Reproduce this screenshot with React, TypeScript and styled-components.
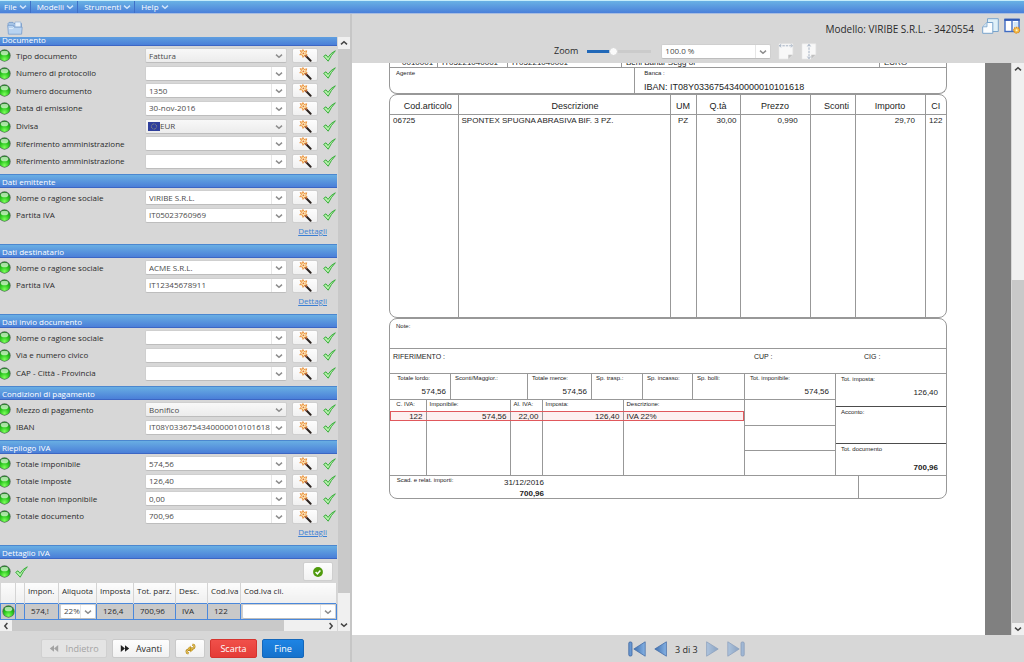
import React, { useState } from 'react';
import styled, { createGlobalStyle, css } from 'styled-components';

const GlobalStyle = createGlobalStyle`
  *, *::before, *::after { box-sizing: border-box; }
  html, body { margin: 0; padding: 0; }
  body, button, input, select {
    font-family: "Open Sans", "Noto Sans", sans-serif;
    font-size: 8px;
    line-height: 12px;
    color: #2a2a2a;
  }
  button, input, select { margin: 0; padding: 0; border: 0; background: none; }
  svg { display: block; flex: none; }
`;

const line = '#989898';

/* ---------- shell ---------- */

const Screen = styled.div`
  display: flex;
  flex-direction: column;
  height: 100vh;
  overflow: hidden;
  background: #d7d7d7;
`;

const MenuBar = styled.nav`
  display: flex;
  flex: none;
  height: 14px;
  border-top: 1px solid #c4edfb;
  border-bottom: 1px solid #a9bde0;
  background: linear-gradient(#68b1e4, #4a80da);
`;

const MenuItem = styled.button`
  display: flex;
  align-items: center;
  gap: 2px;
  padding: 0 3px 0 6px;
  color: #fff;
  border-right: 1px solid #3f70c8;
  &:first-child { padding-left: 4px; }
  &:last-child { border-right: 0; }
`;

const Columns = styled.div`
  display: flex;
  flex: 1;
  min-height: 0;
`;

const Sidebar = styled.aside`
  display: flex;
  flex-direction: column;
  flex: none;
  width: 352px;
  border-right: 2px solid #c6c6c6;
`;

const SideTools = styled.div`
  flex: none;
  height: 23px;
  padding: 7px 7px 0;
`;

const SideScroll = styled.div`
  display: flex;
  flex: 1;
  min-height: 0;
`;

const SideView = styled.div`
  flex: none;
  width: 337px;
  overflow: hidden;
`;

const SideContent = styled.form`
  margin-top: -5px;
`;

const Actions = styled.footer`
  display: flex;
  flex: none;
  align-items: center;
  gap: 5px;
  height: 31px;
  padding: 4px 0 0 41px;
`;

const actionTones = {
  plain: css`background: linear-gradient(#fdfdfd, #f1f1f1); border-color: #cacaca; color: #2a2a2a;`,
  muted: css`background: #e4e4e4; border-color: #d0d0d0; color: #a3a3a3;`,
  red: css`background: linear-gradient(#f0504a, #e53c36); border-color: #d5342e; color: #fff;`,
  blue: css`background: linear-gradient(#1d84e4, #1672cc); border-color: #1467ba; color: #fff;`,
};

const ActionButton = styled.button<{ $tone: keyof typeof actionTones; $width: number }>`
  display: flex;
  align-items: center;
  justify-content: center;
  gap: 6px;
  width: ${(p) => p.$width}px;
  height: 19px;
  border: 1px solid;
  border-radius: 2px;
  font-size: 9px;
  ${(p) => actionTones[p.$tone]}
`;

/* ---------- scroll bars ---------- */

const ScrollBar = styled.div<{ $horizontal?: boolean }>`
  display: flex;
  flex: none;
  flex-direction: ${(p) => (p.$horizontal ? 'row' : 'column')};
  ${(p) => (p.$horizontal ? 'height: 12px;' : 'width: 12px; margin-left: 1px;')}
  background: #f0f0f0;
`;

const ScrollArrow = styled.button`
  display: flex;
  flex: none;
  align-items: center;
  justify-content: center;
  width: 12px;
  height: 12px;
  background: #f0f0f0;
`;

const Track = styled.div<{ $grow: number; $thumb?: boolean }>`
  flex: ${(p) => p.$grow};
  background: ${(p) => (p.$thumb ? '#c9c9c9' : '#f0f0f0')};
`;

/* ---------- form ---------- */

const Section = styled.fieldset`
  min-width: 0;
  margin: 0;
  padding: 0 0 4px;
  border: 0;
`;

const SectionTitle = styled.h2`
  height: 14px;
  margin: 0 0 1px;
  padding: 0 2px;
  font-size: 8px;
  font-weight: 400;
  line-height: 13px;
  color: #fff;
  border-top: 1px solid #4b87cf;
  border-bottom: 1px solid #3c66c4;
  background: linear-gradient(#68aee3, #4a7fd8);
`;

const Rows = styled.div<{ $count: number }>`
  display: grid;
  grid-auto-rows: 1fr;
  height: ${(p) => Math.floor((p.$count * 53) / 3)}px;
`;

const Row = styled.div`
  display: grid;
  grid-template-columns: 13px 124px 142px 26px 13px;
  column-gap: 5px;
  align-items: center;
  margin-left: -2px;
`;

const Label = styled.label`
  white-space: nowrap;
`;

const Combo = styled.div<{ $flat?: boolean }>`
  display: flex;
  height: 15px;
  border: 1px solid #cfcfcf;
  border-bottom-color: #bdbdbd;
  border-radius: 2px;
  overflow: hidden;
  background: ${(p) => (p.$flat ? 'linear-gradient(#f8f8f8, #ececec)' : '#fff')};
`;

const TextField = styled.input`
  flex: 1;
  min-width: 0;
  margin-left: 3px;
  color: #4a4a4a;
  outline: 0;
`;

const SelectField = styled.select`
  flex: 1;
  min-width: 0;
  padding-left: 3px;
  appearance: none;
  color: #4a4a4a;
  outline: 0;
`;

const FlagHolder = styled.span`
  display: flex;
  align-items: center;
  padding-left: 2px;
  & + select { padding-left: 0; }
`;

const DropButton = styled.button<{ $flat?: boolean }>`
  display: flex;
  flex: none;
  align-items: center;
  justify-content: center;
  width: 15px;
  padding-top: 1px;
  border-left: 1px solid ${(p) => (p.$flat ? 'transparent' : '#e6e6e6')};
`;

const IconButton = styled.button<{ $wide?: boolean }>`
  display: flex;
  align-items: center;
  justify-content: center;
  width: ${(p) => (p.$wide ? 30 : 26)}px;
  height: ${(p) => (p.$wide ? 19 : 15)}px;
  border: 1px solid #cfcfcf;
  border-radius: 2px;
  background: linear-gradient(#fdfdfd, #f1f1f1);
`;

const Details = styled.div`
  display: flex;
  justify-content: flex-end;
  height: 16px;
  padding: 1px 10px 0 0;
  a { color: #3b7fd4; }
`;

const VatTools = styled.div`
  display: flex;
  align-items: center;
  gap: 4px;
  height: 23px;
  margin-left: -2px;
  padding-right: 4px;
  button { margin-left: auto; }
`;

const VatTable = styled.table`
  width: 100%;
  table-layout: fixed;
  border-collapse: collapse;
  th {
    height: 20px;
    padding: 0 0 4px 3px;
    text-align: left;
    font-weight: 400;
    white-space: nowrap;
    border-right: 1px solid #d4d4d4;
    background: linear-gradient(#fcfcfc, #efefef);
  }
  td {
    height: 16px;
    padding: 0 0 0 6px;
    overflow: hidden;
    white-space: nowrap;
    border: 1px solid #4a88dc;
    background: #c9c9c9;
  }
  td.control { padding: 0 0 0 1px; }
`;

/* ---------- viewer ---------- */

const Viewer = styled.main`
  display: flex;
  flex: 1;
  flex-direction: column;
  min-width: 0;
`;

const ModelBar = styled.header`
  display: flex;
  flex: none;
  align-items: flex-start;
  justify-content: flex-end;
  gap: 5px;
  height: 26px;
  padding: 4px 3px 0 0;
`;

const ModelName = styled.h1`
  margin: 3px 3px 0 0;
  font-size: 10px;
  font-weight: 400;
  line-height: 16px;
`;

const ZoomBar = styled.div`
  display: flex;
  flex: none;
  align-items: center;
  gap: 7px;
  height: 23px;
  padding: 0 0 1px 202px;
`;

const ZoomLabel = styled.label`
  margin-right: 2px;
  font-size: 9px;
`;

const Slider = styled.input`
  width: 64px;
  height: 12px;
  margin-right: 3px;
  appearance: none;
  background: linear-gradient(90deg, #2168b8 40%, #cbcbcb 40%) center / 100% 3px no-repeat;
  &::-webkit-slider-thumb {
    appearance: none;
    width: 9px;
    height: 9px;
    border: 1px solid #d4d4d4;
    border-radius: 50%;
    background: #fafafa;
  }
`;

const ZoomCombo = styled(Combo)`
  width: 110px;
`;

const PageArea = styled.div`
  display: flex;
  flex: 1;
  min-height: 0;
`;

const Paper = styled.article`
  flex: 1;
  min-width: 0;
  padding: 0 38px 0 37px;
  overflow: hidden;
  background: #fff;
  color: #1c1c1c;
  font-family: "Liberation Sans", Arial, sans-serif;
  font-size: 8px;
  line-height: 10px;
`;

const Desk = styled.div`
  flex: none;
  width: 26px;
  background: #808080;
`;

const Pager = styled.footer`
  display: flex;
  flex: none;
  align-items: center;
  gap: 8px;
  height: 27px;
  padding-left: 276px;
  button { display: flex; }
  button:disabled { opacity: 0.5; }
`;

const PageCount = styled.span`
  padding-top: 3px;
  font-size: 9px;
`;

/* ---------- invoice ---------- */

const Sheet = styled.div`
  margin-top: -9px;
`;

const Box = styled.section`
  border: 1px solid ${line};
  border-radius: 8px;
  overflow: hidden;
`;

const TopBox = styled(Box)`
  border-top: 0;
  border-radius: 0 0 8px 8px;
`;

const Strip = styled.div<{ $columns: string; $height: number }>`
  display: grid;
  grid-template-columns: ${(p) => p.$columns};
  height: ${(p) => p.$height}px;
  border-bottom: 1px solid ${line};
  &:last-child { border-bottom: 0; }
`;

const Cell = styled.div`
  display: flex;
  flex-direction: column;
  justify-content: space-between;
  min-width: 0;
  padding: 0 4px 2px;
  white-space: nowrap;
  border-right: 1px solid ${line};
  &:last-child { border-right: 0; }
`;

const ClippedCell = styled(Cell)`
  padding: 4px 0 0 4px;
  font-size: 8px;
  &:first-child { padding-left: 12px; }
`;

const Caption = styled.span`
  font-size: 6px;
  line-height: 9px;
`;

const Amount = styled.span<{ $strong?: boolean }>`
  align-self: flex-end;
  font-size: 8px;
  font-weight: ${(p) => (p.$strong ? 700 : 400)};
`;

const Plain = styled.div<{ $top: number }>`
  display: flex;
  flex-direction: column;
  justify-content: space-between;
  padding: ${(p) => p.$top}px 6px 1px;
  border-right: 1px solid ${line};
  &:last-child { border-right: 0; }
`;

const BankLine = styled.span`
  font-size: 9px;
  padding-left: 3px;
`;

const Reference = styled.span`
  padding: 3px 3px 0;
  font-size: 7px;
`;

const ItemTable = styled.table`
  width: 100%;
  table-layout: fixed;
  border-collapse: collapse;
  th, td { border-right: 1px solid ${line}; }
  th:last-child, td:last-child { border-right: 0; }
  th {
    height: 19px;
    padding: 4px 0 0;
    font-size: 9px;
    font-weight: 400;
    border-bottom: 1px solid ${line};
  }
  th.text { padding-left: 22px; }
  th.code { padding-left: 8px; }
  td {
    height: 203px;
    padding: 1px 3px 0;
    vertical-align: top;
    white-space: nowrap;
  }
  td.num { text-align: right; }
  td.mid { text-align: center; }
`;

const Totals = styled.div`
  display: grid;
  grid-template-columns: 1fr 91px 110px;
  height: 102px;
  border-bottom: 1px solid ${line};
`;

const TotalsLeft = styled.div`
  border-right: 1px solid ${line};
`;

const Stack = styled.div<{ $rows: string }>`
  display: grid;
  grid-template-rows: ${(p) => p.$rows};
  border-right: 1px solid ${line};
  &:last-child { border-right: 0; }
`;

const StackCell = styled.div<{ $dark?: boolean }>`
  display: flex;
  flex-direction: column;
  justify-content: space-between;
  padding: 0 6px 2px 5px;
  border-bottom: 1px solid ${(p) => (p.$dark ? '#4c4c4c' : line)};
  &:last-child { border-bottom: 0; padding-bottom: 3px; }
`;

const TallStackCell = styled(StackCell)`
  padding: 1px 8px 8px 5px;
`;

const TaxTable = styled.table`
  width: 100%;
  table-layout: fixed;
  border-collapse: collapse;
  th, td { border-right: 1px solid ${line}; padding: 0 3px; }
  th:last-child, td:last-child { border-right: 0; }
  th {
    height: 11px;
    font-size: 6px;
    line-height: 9px;
    font-weight: 400;
    text-align: left;
    vertical-align: top;
    white-space: nowrap;
  }
  td { height: 10px; font-size: 8px; line-height: 9px; text-align: right; }
  td:last-child { text-align: left; }
  tr.hit { outline: 1px solid #e0585c; outline-offset: -1px; background: #fdf0f0; }
  tr.rest td { height: 55px; }
`;

const DueText = styled.div`
  display: flex;
  flex-direction: column;
  align-items: flex-end;
  font-size: 8px;
  line-height: 11px;
  padding: 1px 2px 0 0;
`;

/* ---------- icons ---------- */

const Chevron = ({ dir = 'down', color = '#8e8e8e' }: { dir?: string; color?: string }) => {
  const turn: Record<string, number> = { down: 0, up: 180, left: 90, right: 270 };
  return (
    <svg width="8" height="8" viewBox="0 0 8 8">
      <path d="M1 2.6 4 5.2 7 2.6" fill="none" stroke={color} strokeWidth="1.5" transform={`rotate(${turn[dir]} 4 4)`} />
    </svg>
  );
};

const Led = () => (
  <svg width="13" height="13" viewBox="0 0 12 12">
    <defs>
      <radialGradient id="led" cx="50%" cy="85%" r="85%">
        <stop offset="0" stopColor="#7dff5c" />
        <stop offset="0.5" stopColor="#2cc81f" />
        <stop offset="1" stopColor="#0d7a12" />
      </radialGradient>
    </defs>
    <circle cx="6" cy="6" r="5.7" fill="#55705a" />
    <circle cx="6" cy="6" r="5" fill="url(#led)" />
    <ellipse cx="6" cy="3.7" rx="3.5" ry="2.1" fill="#e6fde0" opacity="0.7" />
  </svg>
);

const Tick = () => (
  <svg width="13" height="12" viewBox="0 0 13 12">
    <path d="M.7 6.3 3 4.8 5 7.4Q7.6 3 12.3.8 8 5.2 5.2 11.2Z" fill="#b9f3ae" stroke="#38ae3a" strokeWidth="1" strokeLinejoin="round" />
  </svg>
);

const Wand = () => (
  <svg width="13" height="13" viewBox="0 0 13 13">
    <path d="M6 6 11.6 11.8" stroke="#2c2420" strokeWidth="2" strokeLinecap="round" />
    <path d="M5 5 7.8 7.8" stroke="#a4583a" strokeWidth="1.8" />
    <path d="M3.9.5 5 2.5 7.8 1.8 6.8 4.3 8.2 6 5.6 6.1 4 8.4 3.3 5.9 .7 5.6 2.5 4 1.2 1.6 3.4 2.3Z" fill="#fdebb8" stroke="#e98d38" strokeWidth="0.9" strokeLinejoin="round" />
    <circle cx="4.4" cy="4.3" r="0.9" fill="#e0703c" />
  </svg>
);

const Flag = () => (
  <svg width="12" height="9" viewBox="0 0 12 9">
    <rect width="12" height="9" fill="#2f3f9c" />
    <circle cx="6" cy="4.5" r="2.6" fill="none" stroke="#a6a678" strokeWidth="0.9" strokeDasharray="0.9 0.7" />
  </svg>
);

const Folder = () => (
  <svg width="16" height="14" viewBox="0 0 16 14">
    <path d="M1 2.5 2 1.4H6L7 2.5H14.5V12.5H2Z" fill="#a7c6e8" stroke="#7197c8" strokeWidth="0.8" />
    <path d="M8 6V1H13.8V6Z" fill="#e6f1fc" stroke="#86a9d4" strokeWidth="0.6" />
    <path d="M.7 4.4H6.8V6.2H15.2L14.6 13.2H1.4Z" fill="#b8d3f1" stroke="#7c9fcd" strokeWidth="0.8" />
    <path d="M6.8 6.2 5.8 7.6H2" fill="none" stroke="#e4f0fc" strokeWidth="0.9" />
  </svg>
);

const OkBadge = () => (
  <svg width="10" height="10" viewBox="0 0 10 10">
    <circle cx="5" cy="5" r="4.9" fill="#4f9a0c" />
    <path d="M2.6 5 4.4 6.8 7.4 3.6" fill="none" stroke="#fff" strokeWidth="1.5" />
  </svg>
);

const Double = ({ back }: { back?: boolean }) => (
  <svg width="10" height="9" viewBox="0 0 10 8">
    <path d="M.8.6 5 4V.8L9.2 4 5 7.2V4L.8 7.4Z" fill={back ? '#a3a3a3' : '#222'} transform={back ? 'rotate(180 5 4)' : undefined} />
  </svg>
);

const recycleLoops = 'M4.2 5.4 7.6 5.6Q10.2 4.8 9 2.2L7.4 1.6M6.8 6.8 3.4 6.6Q.8 7.4 2 9.8L3.6 10.6';

const Recycle = () => (
  <svg width="11" height="12" viewBox="0 0 11 12">
    <g fill="none" strokeLinejoin="round">
      <path d={recycleLoops} stroke="#b0841c" strokeWidth="2.2" />
      <path d={recycleLoops} stroke="#f2d36c" strokeWidth="1" />
    </g>
    <path d="M5.6 3.2V7.4L3 5.3ZM5.4 4.8V9L8 6.9Z" fill="#e6bd3c" stroke="#a97c14" strokeWidth="0.4" />
  </svg>
);

const Windows = () => (
  <svg width="17" height="16" viewBox="0 0 17 16">
    <path d="M5.5.7H16.3V13.5H5.5Z" fill="#dff0f8" stroke="#7aa4cc" />
    <path d="M5 4.5H10.8V15.3H.7V8.8Z" fill="#fafdff" stroke="#7aa4cc" />
    <path d="M5 4.5V8.8H.7" fill="#cfe2f1" stroke="#7aa4cc" strokeWidth="0.8" />
  </svg>
);

const Layout = () => (
  <svg width="17" height="17" viewBox="0 0 17 17">
    <rect x="1" y="1.5" width="14" height="12" fill="#fff" stroke="#3f6cc4" strokeWidth="1.4" />
    <path d="M.4 1.8H15.7" stroke="#3159b4" strokeWidth="2.2" />
    <path d="M8 2V13.5" stroke="#3f6cc4" strokeWidth="1.4" />
    <path d="M9.5 4H14V12H9.5Z" fill="#d2e6f8" />
    <circle cx="12.6" cy="12.2" r="2.9" fill="#f5c04c" stroke="#dd8f28" strokeWidth="1.3" strokeDasharray="1.4 0.7" />
    <circle cx="12.6" cy="12.2" r="1" fill="#fff3cf" />
  </svg>
);

const Fit = ({ vertical }: { vertical?: boolean }) => (
  <svg width="16" height="17" viewBox="0 0 16 17">
    <path d="M1 .8H14.8V11.5L10.3 16H1Z" fill="#f8f8f8" stroke="#e6e6e6" strokeWidth="0.6" />
    <path d="M10.3 16V11.8H14.6Z" fill="#c0c0c0" />
    {vertical ? (
      <path d="M8 1V16M6.4 3.4 8 1.4 9.6 3.4M6.4 13.6 8 15.6 9.6 13.6" fill="none" stroke="#9aa8bc" strokeWidth="0.9" strokeDasharray="2.4 1" />
    ) : (
      <path d="M1 2.8H15M3.2 1.3 1.4 2.8 3.2 4.3M12.8 1.3 14.6 2.8 12.8 4.3" fill="none" stroke="#9aa8bc" strokeWidth="0.9" strokeDasharray="2.4 1" />
    )}
  </svg>
);

const Step = ({ flip, bar }: { flip?: boolean; bar?: boolean }) => (
  <svg width={bar ? 18 : 13} height="16" viewBox={bar ? '0 0 18 16' : '0 0 13 16'}>
    <defs>
      <linearGradient id="step" x1="0" x2="1">
        <stop offset="0" stopColor="#3f6fae" />
        <stop offset="1" stopColor="#86b2e4" />
      </linearGradient>
    </defs>
    <g transform={flip ? `translate(${bar ? 18 : 13} 0) scale(-1 1)` : undefined}>
      {bar && <rect x="0.8" y="1" width="3.2" height="14" rx="1.2" fill="#6a98d2" stroke="#3c649e" strokeWidth="0.8" />}
      <path d={bar ? 'M17.2 .8V15.2L5.8 8Z' : 'M12.4 .8V15.2L.8 8Z'} fill="url(#step)" stroke="#466fa8" strokeWidth="0.8" />
    </g>
  </svg>
);

/* ---------- parts ---------- */

type Field = { id: string; label: string; value?: string; select?: boolean; flag?: boolean };

const ComboField = ({ id, value = '', select, flag, name }: Omit<Field, 'label'> & { name?: string }) => (
  <Combo $flat={select}>
    {flag && <FlagHolder><Flag /></FlagHolder>}
    {select ? (
      <SelectField id={id} defaultValue={value}><option>{value}</option></SelectField>
    ) : (
      <TextField id={id} defaultValue={value} aria-label={name} />
    )}
    <DropButton type="button" $flat={select} aria-label="Apri elenco"><Chevron /></DropButton>
  </Combo>
);

const FieldRow = ({ label, ...field }: Field) => (
  <Row>
    <Led />
    <Label htmlFor={field.id}>{label}</Label>
    <ComboField {...field} />
    <IconButton type="button" aria-label="Suggerisci"><Wand /></IconButton>
    <Tick />
  </Row>
);

const sections: { title: string; details?: boolean; fields: Field[] }[] = [
  {
    title: 'Documento',
    fields: [
      { id: 'tipo', label: 'Tipo documento', value: 'Fattura', select: true },
      { id: 'protocollo', label: 'Numero di protocollo' },
      { id: 'numero', label: 'Numero documento', value: '1350' },
      { id: 'data', label: 'Data di emissione', value: '30-nov-2016' },
      { id: 'divisa', label: 'Divisa', value: 'EUR', select: true, flag: true },
      { id: 'rif1', label: 'Riferimento amministrazione' },
      { id: 'rif2', label: 'Riferimento amministrazione' },
    ],
  },
  {
    title: 'Dati emittente',
    details: true,
    fields: [
      { id: 'em-nome', label: 'Nome o ragione sociale', value: 'VIRIBE S.R.L.' },
      { id: 'em-iva', label: 'Partita IVA', value: 'IT05023760969' },
    ],
  },
  {
    title: 'Dati destinatario',
    details: true,
    fields: [
      { id: 'de-nome', label: 'Nome o ragione sociale', value: 'ACME S.R.L.' },
      { id: 'de-iva', label: 'Partita IVA', value: 'IT12345678911' },
    ],
  },
  {
    title: 'Dati invio documento',
    fields: [
      { id: 'in-nome', label: 'Nome o ragione sociale' },
      { id: 'in-via', label: 'Via e numero civico' },
      { id: 'in-cap', label: 'CAP - Città - Provincia' },
    ],
  },
  {
    title: 'Condizioni di pagamento',
    fields: [
      { id: 'mezzo', label: 'Mezzo di pagamento', value: 'Bonifico', select: true },
      { id: 'iban', label: 'IBAN', value: 'IT08Y0336754340000010101618' },
    ],
  },
  {
    title: 'Riepilogo IVA',
    details: true,
    fields: [
      { id: 'imponibile', label: 'Totale imponibile', value: '574,56' },
      { id: 'imposte', label: 'Totale imposte', value: '126,40' },
      { id: 'non-imp', label: 'Totale non imponibile', value: '0,00' },
      { id: 'tot-doc', label: 'Totale documento', value: '700,96' },
    ],
  },
];

const Arrow = ({ dir, label }: { dir: string; label: string }) => (
  <ScrollArrow type="button" aria-label={label}><Chevron dir={dir} color="#444" /></ScrollArrow>
);

const VatDetail = () => (
  <Section>
    <SectionTitle>Dettaglio IVA</SectionTitle>
    <VatTools>
      <Led />
      <Tick />
      <IconButton type="button" $wide aria-label="Conferma"><OkBadge /></IconButton>
    </VatTools>
    <VatTable>
      <colgroup>
        <col width="15" /><col width="9" /><col width="34" /><col width="38" /><col width="37" />
        <col width="42" /><col width="32" /><col width="33" /><col />
      </colgroup>
      <thead>
        <tr>
          <th /><th /><th>Impon.</th><th>Aliquota</th><th>Imposta</th><th>Tot. parz.</th><th>Desc.</th><th>Cod.Iva</th><th>Cod.Iva cli.</th>
        </tr>
      </thead>
      <tbody>
        <tr>
          <td className="control"><Led /></td><td /><td>574,!</td>
          <td className="control"><ComboField id="aliquota" value="22%" name="Aliquota" /></td>
          <td>126,4</td><td>700,96</td><td>IVA</td><td>122</td>
          <td className="control"><ComboField id="cod-cli" name="Cod.Iva cli." /></td>
        </tr>
      </tbody>
    </VatTable>
    <ScrollBar $horizontal>
      <Arrow dir="left" label="Scorri a sinistra" />
      <Track $grow={272} $thumb />
      <Track $grow={41} />
      <Arrow dir="right" label="Scorri a destra" />
    </ScrollBar>
  </Section>
);

const Invoice = () => (
  <Sheet>
    <TopBox>
      <Strip $columns="48px 70px 114px 1fr 66px" $height={14}>
        <ClippedCell>0010001</ClippedCell>
        <ClippedCell>IT05221040001</ClippedCell>
        <ClippedCell>IT05221040001</ClippedCell>
        <ClippedCell>Beni Banar Segg or</ClippedCell>
        <ClippedCell>EURO</ClippedCell>
      </Strip>
      <Strip $columns="245px 1fr" $height={25}>
        <Plain $top={1}><Caption>Agente</Caption></Plain>
        <Plain $top={1}><Caption>&nbsp;&nbsp;Banca :</Caption><BankLine>IBAN: IT08Y0336754340000010101618</BankLine></Plain>
      </Strip>
    </TopBox>
    <Box>
      <ItemTable>
        <colgroup>
          <col width="68" /><col /><col width="26" /><col width="44" /><col width="70" /><col width="45" /><col width="70" /><col width="21" />
        </colgroup>
        <thead>
          <tr>
            <th className="code">Cod.articolo</th><th className="text">Descrizione</th><th>UM</th><th>Q.tà</th><th>Prezzo</th><th className="code">Sconti</th><th>Importo</th><th>CI</th>
          </tr>
        </thead>
        <tbody>
          <tr>
            <td>06725</td><td>SPONTEX SPUGNA ABRASIVA BIF. 3 PZ.</td><td className="mid">PZ</td><td className="num">30,00</td>
            <td className="num">0,990&nbsp;&nbsp;&nbsp;&nbsp;</td><td /><td className="num">29,70&nbsp;&nbsp;&nbsp;</td><td className="mid">122</td>
          </tr>
        </tbody>
      </ItemTable>
    </Box>
    <Box>
      <Strip $columns="1fr" $height={30}>
        <Plain $top={3}><Caption>Note:</Caption></Plain>
      </Strip>
      <Strip $columns="361px 110px 1fr" $height={25}>
        <Reference>RIFERIMENTO :</Reference><Reference>CUP :</Reference><Reference>CIG :</Reference>
      </Strip>
      <Totals>
        <TotalsLeft>
          <Strip $columns="61px 77px 64px 51px 50px 1fr" $height={26}>
            <Cell><Caption>&nbsp;&nbsp;Totale lordo:</Caption><Amount>574,56</Amount></Cell>
            <Cell><Caption>Sconti/Maggior.:</Caption></Cell>
            <Cell><Caption>Totale merce:</Caption><Amount>574,56</Amount></Cell>
            <Cell><Caption>Sp. trasp.:</Caption></Cell>
            <Cell><Caption>Sp. incasso:</Caption></Cell>
            <Cell><Caption>Sp. bolli:</Caption></Cell>
          </Strip>
          <TaxTable>
            <colgroup>
              <col width="36" /><col width="84" /><col width="32" /><col width="81" /><col />
            </colgroup>
            <thead>
              <tr><th>&nbsp;&nbsp;C. IVA:</th><th>Imponibile:</th><th>Al. IVA:</th><th>Imposta:</th><th>Descrizione:</th></tr>
            </thead>
            <tbody>
              <tr className="hit"><td>122</td><td>574,56</td><td>22,00</td><td>126,40</td><td>IVA 22%</td></tr>
              <tr className="rest"><td /><td /><td /><td /><td /></tr>
            </tbody>
          </TaxTable>
        </TotalsLeft>
        <Stack $rows="26px 26px 25px 1fr">
          <StackCell><Caption>Tot. imponibile:</Caption><Amount>574,56</Amount></StackCell>
          <StackCell /><StackCell /><StackCell />
        </Stack>
        <Stack $rows="33px 37px 1fr">
          <TallStackCell $dark><Caption>Tot. imposta:</Caption><Amount>126,40</Amount></TallStackCell>
          <TallStackCell $dark><Caption>Acconto:</Caption></TallStackCell>
          <TallStackCell><Caption>Tot. documento</Caption><Amount $strong>700,96</Amount></TallStackCell>
        </Stack>
      </Totals>
      <Strip $columns="106px 50px 1fr 87px" $height={22}>
        <Caption>&nbsp;&nbsp;&nbsp;&nbsp;Scad. e relat. importi:</Caption>
        <DueText><span>31/12/2016</span><b>700,96</b></DueText>
        <Cell />
        <Cell />
      </Strip>
    </Box>
  </Sheet>
);

export default function App() {
  const [zoom, setZoom] = useState(40);
  return (
    <Screen>
      <GlobalStyle />
      <MenuBar>
        {['File', 'Modelli', 'Strumenti', 'Help'].map((name) => (
          <MenuItem key={name} type="button">{name}<Chevron color="#cfe3fa" /></MenuItem>
        ))}
      </MenuBar>
      <Columns>
        <Sidebar>
          <SideTools><Folder /></SideTools>
          <SideScroll>
            <SideView>
              <SideContent>
                {sections.map((section) => (
                  <Section key={section.title}>
                    <SectionTitle>{section.title}</SectionTitle>
                    <Rows $count={section.fields.length}>
                      {section.fields.map((field) => <FieldRow key={field.id} {...field} />)}
                    </Rows>
                    {section.details && <Details><a href="#dettagli">Dettagli</a></Details>}
                  </Section>
                ))}
                <VatDetail />
              </SideContent>
            </SideView>
            <ScrollBar>
              <Arrow dir="up" label="Scorri in alto" />
              <Track $grow={540} $thumb />
              <Track $grow={26} />
              <Arrow dir="down" label="Scorri in basso" />
            </ScrollBar>
          </SideScroll>
          <Actions>
            <ActionButton type="button" $tone="muted" $width={66}><Double back />Indietro</ActionButton>
            <ActionButton type="button" $tone="plain" $width={58}><Double />Avanti</ActionButton>
            <ActionButton type="button" $tone="plain" $width={30} aria-label="Ricarica"><Recycle /></ActionButton>
            <ActionButton type="button" $tone="red" $width={47}>Scarta</ActionButton>
            <ActionButton type="button" $tone="blue" $width={42}>Fine</ActionButton>
          </Actions>
        </Sidebar>
        <Viewer>
          <ModelBar>
            <ModelName>Modello: VIRIBE S.R.L. - 3420554</ModelName>
            <Windows />
            <Layout />
          </ModelBar>
          <ZoomBar>
            <ZoomLabel htmlFor="zoom">Zoom</ZoomLabel>
            <Slider id="zoom" type="range" value={zoom} onChange={(e) => setZoom(Number(e.target.value))} />
            <ZoomCombo>
              <TextField aria-label="Percentuale zoom" defaultValue="100.0 %" />
              <DropButton type="button" aria-label="Apri elenco"><Chevron /></DropButton>
            </ZoomCombo>
            <Fit />
            <Fit vertical />
          </ZoomBar>
          <PageArea>
            <Paper><Invoice /></Paper>
            <Desk />
            <ScrollBar>
              <Arrow dir="up" label="Pagina su" />
              <Track $grow={205} />
              <Track $grow={343} $thumb />
              <Arrow dir="down" label="Pagina giù" />
            </ScrollBar>
          </PageArea>
          <Pager>
            <button type="button" aria-label="Prima pagina"><Step bar /></button>
            <button type="button" aria-label="Pagina precedente"><Step /></button>
            <PageCount>3 di 3</PageCount>
            <button type="button" aria-label="Pagina successiva" disabled><Step flip /></button>
            <button type="button" aria-label="Ultima pagina" disabled><Step flip bar /></button>
          </Pager>
        </Viewer>
      </Columns>
    </Screen>
  );
}
